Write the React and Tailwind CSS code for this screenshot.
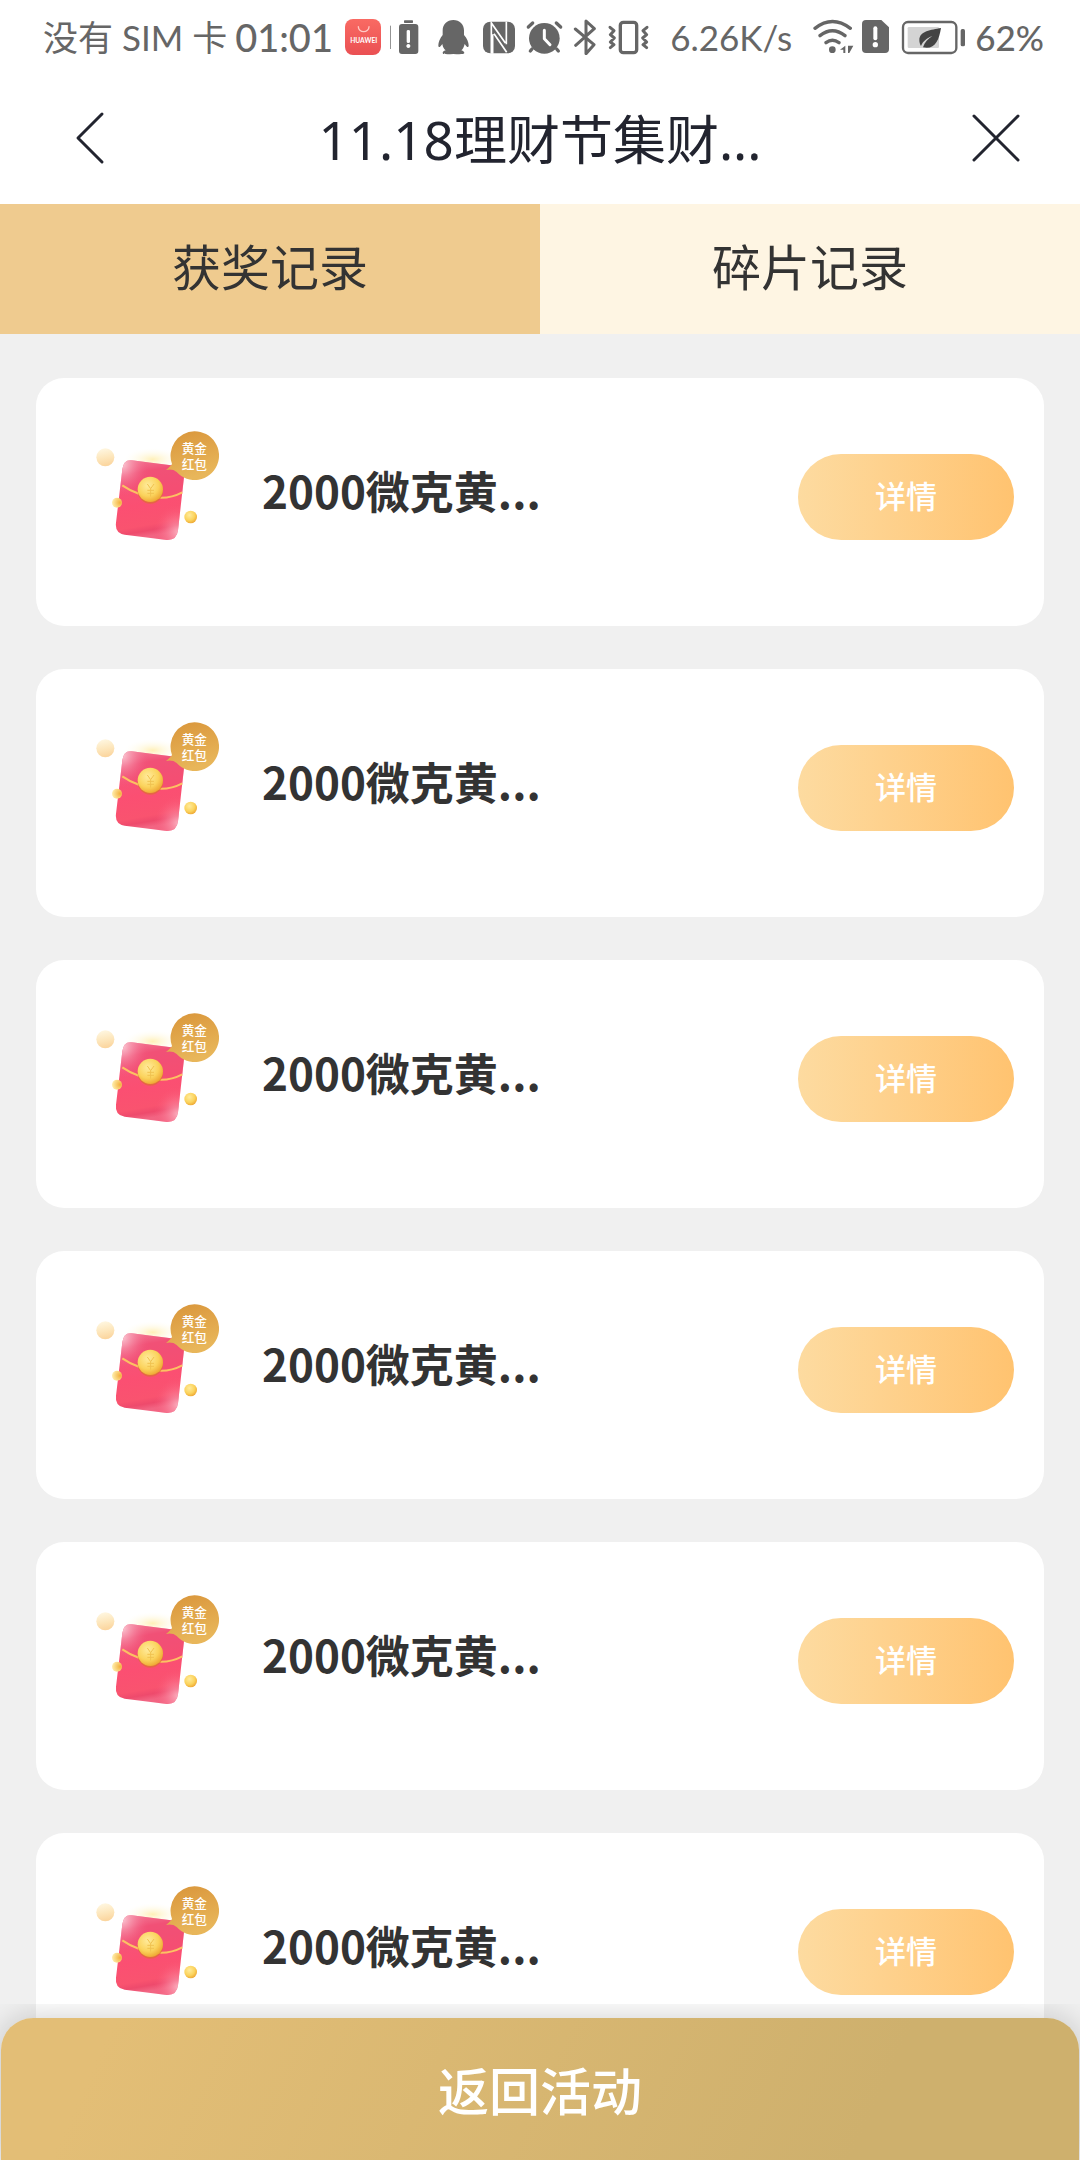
import React, { useState } from 'react';

const records = [1, 2, 3, 4, 5, 6].map(id => ({ id, title: '2000微克黄...' }));

const tabs = [
  { key: 'prize', label: '获奖记录' },
  { key: 'piece', label: '碎片记录' }
];

const StatusBar = () => (
  <div className="flex h-[72px] items-center justify-between pt-0.5 pl-[43px] pr-9 font-['Lato','Noto_Sans_CJK_SC',sans-serif] text-[#666]">
    <div className="flex items-center">
      <span className="text-[35px] leading-9">没有 SIM 卡</span>
      <span className="pl-2 text-[38px] leading-9 font-medium">01:01</span>
      <svg className="ml-2 h-9 w-11" viewBox="9 54 132 108">
        <defs>
          <linearGradient id="store" x1="0" y1="0" x2="0" y2="1">
            <stop offset="0" stopColor="#f96a63" />
            <stop offset="1" stopColor="#ea5053" />
          </linearGradient>
        </defs>
        <rect x="21" y="54" width="108" height="108" rx="24" fill="url(#store)" />
        <path d="M61 77a16 15 0 0 0 32 0" fill="none" stroke="#ffc9c4" strokeWidth="4" strokeLinecap="round" />
        <text x="77" y="125" textAnchor="middle" fontSize="20" fontWeight="700" fill="#fff">HUAWEI</text>
      </svg>
      <svg className="h-9 w-[43px]" viewBox="141 54 129 108" fill="currentColor">
        <rect x="156" y="74" width="3" height="70" opacity=".7" />
        <rect x="198" y="58" width="27" height="8" rx="2" />
        <path fillRule="evenodd" d="M192 69h40q9 0 9 9v72q0 9-9 9h-40q-9 0-9-9V78q0-9 9-9zM206 90v32q0 4 5 4t5-4V90q0-3-5-3t-5 3zM211 129a6 6 0 1 0 .1 0z" />
      </svg>
      <svg className="h-9 w-12" viewBox="270 54 144 108" fill="currentColor">
        <path d="M346 57c-19 0-32 13-32 31v14c-8 10-13 22-13 31 0 8 5 7 12-4 1 8 5 15 10 19-7 2-9 5-9 8 0 4 12 4 32 3 20 1 33 1 33-3 0-3-3-6-9-8 5-4 8-11 10-19 7 11 12 12 12 4 0-9-5-21-14-31V88c0-18-13-31-32-31z" />
      </svg>
      <svg className="h-9 w-[45px]" viewBox="414 54 135 108">
        <rect x="435" y="62" width="96" height="95" rx="22" fill="currentColor" />
        <path d="M460 158V66l42 60M468 98l38 56M505 62v68M464 100v58" fill="none" stroke="#fff" strokeWidth="5" />
      </svg>
      <svg className="h-9 w-[47px]" viewBox="549 54 141 108" stroke="currentColor" strokeLinecap="round" fill="none">
        <circle cx="619" cy="112" r="46" fill="currentColor" stroke="none" />
        <path d="M571 78l13-12M668 78l-13-12" strokeWidth="10" />
        <path d="M582 144l-5 6M656 144l5 6" strokeWidth="10" />
        <path d="M619 88v25l17 18" stroke="#fff" strokeWidth="9" strokeLinejoin="round" />
      </svg>
      <svg className="h-9 w-[35px]" viewBox="690 54 105 108" stroke="currentColor" strokeLinecap="round" strokeLinejoin="round" fill="none" strokeWidth="9">
        <path d="M712 84l56 47-24 27V60l25 23-56 50" />
      </svg>
      <svg className="h-9 w-[51px]" viewBox="795 54 153 108" stroke="currentColor" strokeLinecap="round" strokeLinejoin="round" fill="none">
        <rect x="847" y="64" width="49" height="91" rx="9" strokeWidth="10" />
        <path d="M816 79l12 10-11 12 12 10-12 12 11 8-11 9M927 79l-12 10 11 12-12 10 12 12-11 8 11 9" strokeWidth="9" />
      </svg>
    </div>

    <div className="flex items-center">
      <span className="text-[35px] leading-9">6.26K/s</span>
      {/* Wi-Fi with traffic arrows */}
      <svg className="ml-4 h-9 w-[50px]" viewBox="444 54 150 108" stroke="currentColor" strokeLinecap="round" fill="none">
        <path d="M465 82q52-41 106 0M480 104q37-30 75 0M498 125q19-15 39 0" strokeWidth="10" />
        <circle cx="517" cy="146" r="10" fill="currentColor" stroke="none" />
        <path d="M540 146l16-12v22h-6v-10zM564 134h16l-12 22h-4z" fill="currentColor" stroke="none" />
      </svg>
      <svg className="h-9 w-9" viewBox="594 54 108 108" fill="currentColor">
        <path d="M618 57h46l23 22v65q0 12-12 12h-57q-12 0-12-12V69q0-12 12-12z" />
        <path d="M646 82v30" stroke="#fff" strokeWidth="12" strokeLinecap="round" />
        <circle cx="646" cy="131" r="8" fill="#fff" />
      </svg>
      <svg className="h-9 w-[75px]" viewBox="702 54 225 108" fill="none">
        <rect x="729" y="63" width="160" height="93" rx="15" stroke="currentColor" strokeWidth="7" />
        <rect x="743" y="78" width="94" height="63" rx="4" fill="#d4d4d4" />
        <rect x="902" y="84" width="13" height="52" rx="5" fill="currentColor" />
        <path d="M843 81c-30 6-64 8-65 36 0 7 2 13 5 18 6-15 18-24 34-30-13 8-23 19-28 34 35 8 48-20 54-58z" fill="#444" />
      </svg>
      <span className="pl-1.5 text-[35px] leading-9 font-medium">62%</span>
    </div>
  </div>
);

const RedPacket = () => (
  <svg className="size-[150px] shrink-0" viewBox="0 0 450 450">
    <defs>
      <linearGradient id="packet" x1="0" y1="0" x2="0.15" y2="1">
        <stop offset="0" stopColor="#f7a3b5" />
        <stop offset="0.2" stopColor="#f3557b" />
        <stop offset="0.6" stopColor="#fb4f72" />
        <stop offset="0.86" stopColor="#f9536f" />
        <stop offset="0.93" stopColor="#ee4a6c" />
        <stop offset="1" stopColor="#f26583" />
      </linearGradient>
      <radialGradient id="shineTop" cx="0.1" cy="0.05" r="0.4">
        <stop offset="0" stopColor="#fbd0da" stopOpacity="0.9" />
        <stop offset="1" stopColor="#f3557b" stopOpacity="0" />
      </radialGradient>
      <radialGradient id="shineBottom" cx="0.9" cy="0.9" r="0.35">
        <stop offset="0" stopColor="#fbb0c0" stopOpacity="0.9" />
        <stop offset="1" stopColor="#fb4f72" stopOpacity="0" />
      </radialGradient>
      <radialGradient id="coin" cx="0.4" cy="0.35" r="0.7">
        <stop offset="0" stopColor="#ffeb9c" />
        <stop offset="0.6" stopColor="#fbd35c" />
        <stop offset="1" stopColor="#eda32f" />
      </radialGradient>
      <radialGradient id="sideCoin" cx="0.8" cy="0.5" r="0.8">
        <stop offset="0" stopColor="#f3b03c" />
        <stop offset="1" stopColor="#fff0b0" />
      </radialGradient>
      <linearGradient id="paleCoin" x1="0" y1="0" x2="0.2" y2="1">
        <stop offset="0" stopColor="#fff9e6" />
        <stop offset="0.6" stopColor="#fde6bb" />
        <stop offset="1" stopColor="#fbd6a0" />
      </linearGradient>
      <linearGradient id="badge" x1="0" y1="0" x2="0.3" y2="1">
        <stop offset="0" stopColor="#d9953a" />
        <stop offset="1" stopColor="#e8b65a" />
      </linearGradient>
      <radialGradient id="glow">
        <stop offset="0" stopColor="#fff0b8" />
        <stop offset="1" stopColor="#fffdf3" stopOpacity="0" />
      </radialGradient>
    </defs>
    <ellipse cx="218" cy="118" rx="85" ry="34" fill="url(#glow)" />
    <circle cx="76" cy="112" r="27" fill="url(#paleCoin)" />
    <path d="M155 121l130 16q30 4 27 34l-18 160q-4 31-34 29l-126-16q-30-5-26-36l19-160q4-30 28-27z" fill="url(#packet)" />
    <path d="M127 196q48 34 112 37 36 1 68-16l5-46q3-30-27-34l-130-16q-24-3-28 27z" fill="#ee4a70" opacity=".4" />
    <path d="M155 121l130 16q30 4 27 34l-18 160q-4 31-34 29l-126-16q-30-5-26-36l19-160q4-30 28-27z" fill="url(#shineTop)" />
    <path d="M155 121l130 16q30 4 27 34l-18 160q-4 31-34 29l-126-16q-30-5-26-36l19-160q4-30 28-27z" fill="url(#shineBottom)" />
    <path d="M127 196q48 34 112 37 36 1 68-16" fill="none" stroke="#fcc162" strokeWidth="6" />
    <circle cx="211" cy="213" r="38" fill="#dd6f32" opacity=".7" />
    <circle cx="211" cy="208" r="38" fill="url(#coin)" />
    <path d="M202 192l10 14 10-14M212 206v24M202 211h20M202 220h20" fill="none" stroke="#f0c250" strokeWidth="3" />
    <circle cx="111" cy="248" r="15" fill="url(#sideCoin)" />
    <circle cx="332" cy="291" r="19" fill="url(#coin)" />
    <path d="M343 34a73 73 0 1 1-53 122q-12-10-32-6 14-12 18-18A73 73 0 0 1 343 34z" fill="url(#badge)" />
    <g fill="#fff" fontSize="38" fontWeight="500" textAnchor="middle">
      <text x="343" y="100">黄金</text>
      <text x="343" y="146">红包</text>
    </g>
  </svg>
);

const RecordCard = ({ title }) => (
  <li className="flex rounded-[28px] bg-white pt-[42px] pr-[30px] pb-14 pl-11">
    <RedPacket />
    <h2 className="mt-10 ml-8 flex-1 text-[44px] leading-[60px] font-bold text-[#333]">{title}</h2>
    <button className="mt-[34px] h-[86px] w-[216px] rounded-full bg-linear-to-r from-[#fddba0] to-[#ffc370] pb-1 text-[31px] font-medium text-white">详情</button>
  </li>
);

const App = () => {
  const [active, setActive] = useState('prize');

  return (
    <div className="flex h-screen flex-col bg-[#f0f0f0] font-['Noto_Sans_CJK_SC',sans-serif]">
      <header className="bg-white">
        <StatusBar />
        <div className="flex h-[132px] items-center justify-between px-[60px] text-[#22242f]">
          <button aria-label="返回">
            <svg className="h-[60px] w-[60px]" viewBox="0 0 60 60" fill="none" stroke="currentColor" strokeWidth="3" strokeLinecap="round" strokeLinejoin="round">
              <path d="M42 6L18 30l24 24" />
            </svg>
          </button>
          <h1 className="pt-1 font-['Noto_Sans','Noto_Sans_CJK_SC',sans-serif] text-[53px] leading-[72px]">11.18理财节集财...</h1>
          <button aria-label="关闭">
            <svg className="h-[60px] w-[60px]" viewBox="0 0 60 60" fill="none" stroke="currentColor" strokeWidth="3" strokeLinecap="round">
              <path d="M14 8l44 44M58 8L14 52" />
            </svg>
          </button>
        </div>
        <nav className="grid grid-cols-2">
          {tabs.map(tab => (
            <button
              key={tab.key}
              onClick={() => setActive(tab.key)}
              className={`h-[130px] pb-2 text-[49px] text-[#333] ${active === tab.key ? 'bg-[#efcb8f]' : 'bg-[#fef5e3]'}`}
            >
              {tab.label}
            </button>
          ))}
        </nav>
      </header>

      <main className="min-h-0 flex-1 overflow-y-auto px-9 pt-11 pb-[180px] [scrollbar-width:none]">
        <ul className="flex flex-col gap-[43px]">
          {records.map(record => <RecordCard key={record.id} title={record.title} />)}
        </ul>
      </main>

      {/* Stays above the scrolling list */}
      <footer className="fixed inset-x-0 bottom-0 overflow-hidden px-px pt-3.5">
        <button className="h-[142px] w-full rounded-t-[32px] bg-linear-[115deg] from-[#e3be76] from-10% to-[#ceb06d] to-80% text-[51px] font-medium text-white shadow-[0_0_32px_rgba(0,0,0,0.2)]">返回活动</button>
      </footer>
    </div>
  );
};

export default App;
